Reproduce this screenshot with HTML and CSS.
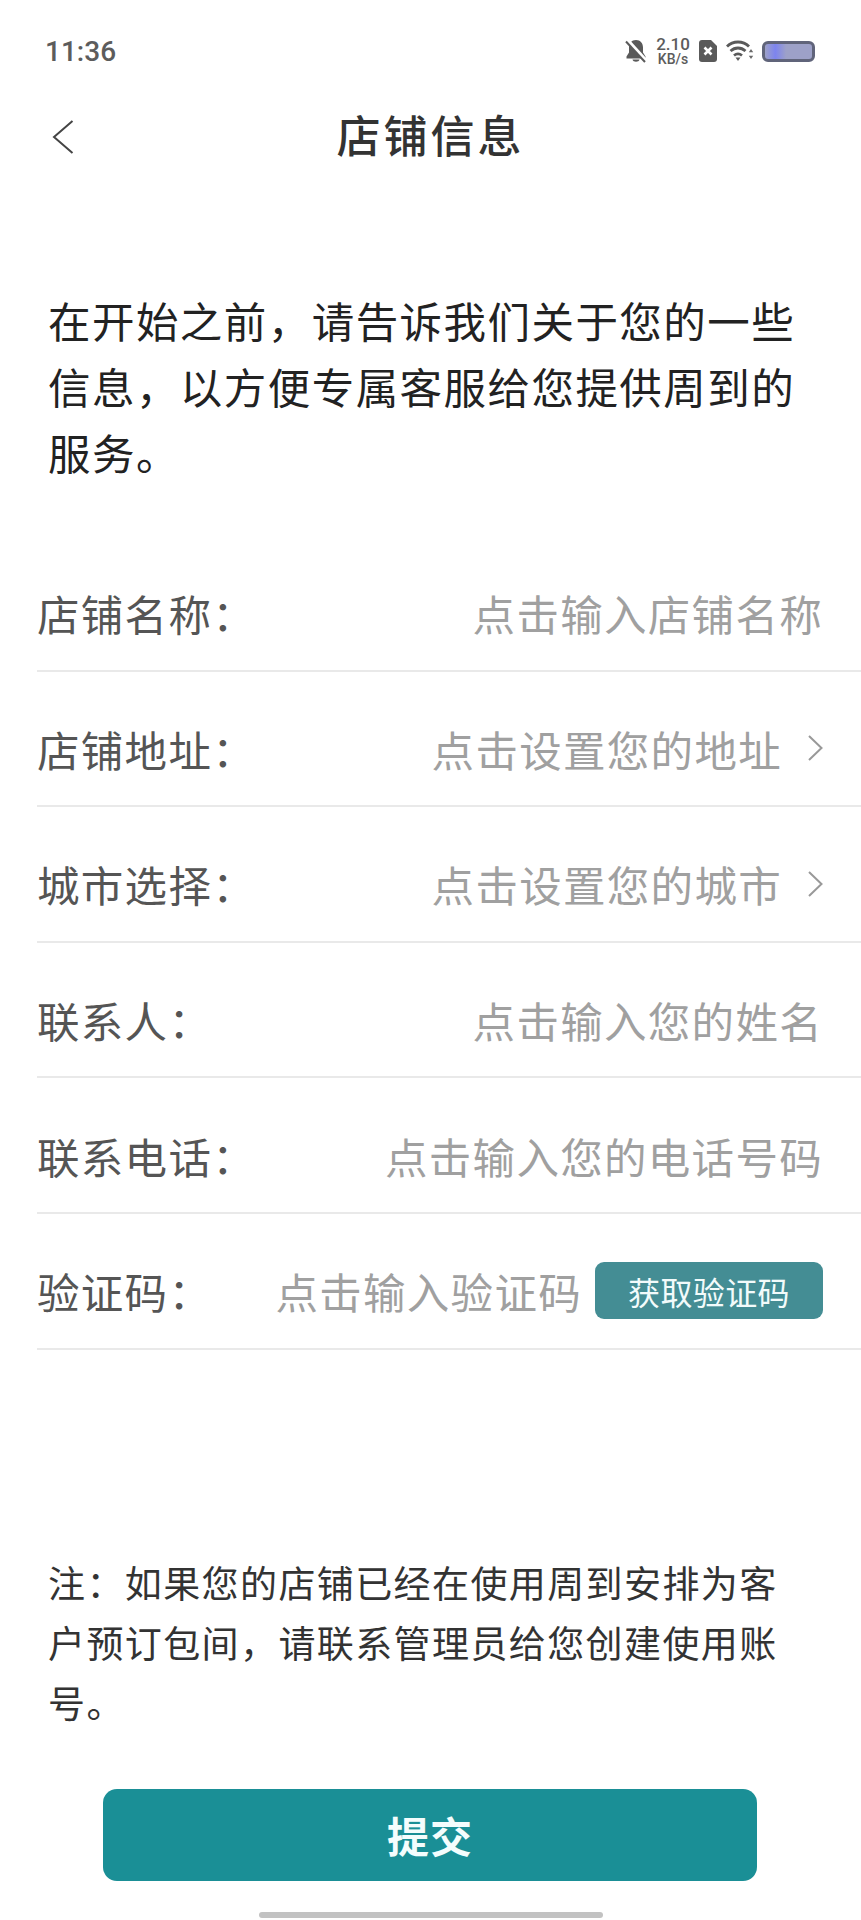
FILE: index.html
```html
<!DOCTYPE html>
<html lang="zh-CN">
<head>
    <meta charset="UTF-8">
    <meta name="viewport" content="width=device-width, initial-scale=1.0">
    <title>店铺信息</title>
    <link rel="stylesheet" href="styles.css">
</head>
<body>
    <div id="wrapper">
        <div class="status">
            <span class="time">11:36</span>
            <div class="status-icons">
                <svg class="bell" width="22" height="24" viewBox="0 0 22 24">
                    <path d="M11 1c-4.500 0-7 3.200-7 7.500v5L1.500 17.500v2h19v-2l-2.500-4v-5C18 4.200 15.500 1 11 1z" fill="#5a5a5a"/>
                    <path d="M7.500 20.500h7c-.5 3-6.500 3-7 0z" fill="#5a5a5a"/>
                    <path d="M1.500 0L21.500 22" stroke="#fff" stroke-width="3.500"/>
                    <path d="M1 2.500L20 23" stroke="#5a5a5a" stroke-width="2"/>
                </svg>
                <div class="speed"><span>2.10</span><span class="unit">KB/s</span></div>
                <svg class="sim" width="18" height="22" viewBox="0 0 18 22">
                    <path d="M3 0h9l6 6v13a3 3 0 0 1-3 3H3a3 3 0 0 1-3-3V3a3 3 0 0 1 3-3z" fill="#5a5a5a"/>
                    <path d="M5.500 7.500l7 7M12.500 7.500l-7 7" stroke="#fff" stroke-width="2.600"/>
                </svg>
                <svg class="wifi" width="28" height="22" viewBox="0 0 28 22">
                    <path d="M1 6.500C7 .5 17 .5 23 6.500" fill="none" stroke="#5a5a5a" stroke-width="2.800"/>
                    <path d="M4.500 11C9 7 15 7 19.500 11" fill="none" stroke="#5a5a5a" stroke-width="2.800"/>
                    <path d="M8 15.500c2.500-2 5.500-2 8 0" fill="none" stroke="#5a5a5a" stroke-width="2.800"/>
                    <path d="M9.500 17.500h5L12 21z" fill="#5a5a5a"/>
                    <path d="M25 9l2.200 3.200h-4.400zM25 19l-2.200-3.200h4.400z" fill="#6a6a6a"/>
                </svg>
                <div class="battery"></div>
            </div>
        </div>

        <div class="header">
            <svg class="back" width="22" height="34" viewBox="0 0 22 34">
                <path d="M20.500 1L2 17l18.500 16" fill="none" stroke="#444" stroke-width="2"/>
            </svg>
            <h1 class="title">店铺信息</h1>
        </div>

        <p class="intro">在开始之前&#65292;请告诉我们关于您的一些信息&#65292;以方便专属客服给您提供周到的服务。</p>

        <div class="form">
            <div class="row">
                <span class="label">店铺名称&#65306;</span>
                <span class="hint">点击输入店铺名称</span>
            </div>
            <div class="row">
                <span class="label">店铺地址&#65306;</span>
                <span class="hint">点击设置您的地址</span>
                <svg class="more" width="15" height="26" viewBox="0 0 15 26">
                    <path d="M1 1l12.500 12L1 25" fill="none" stroke="#999" stroke-width="2"/>
                </svg>
            </div>
            <div class="row">
                <span class="label">城市选择&#65306;</span>
                <span class="hint">点击设置您的城市</span>
                <svg class="more" width="15" height="26" viewBox="0 0 15 26">
                    <path d="M1 1l12.500 12L1 25" fill="none" stroke="#999" stroke-width="2"/>
                </svg>
            </div>
            <div class="row">
                <span class="label">联系人&#65306;</span>
                <span class="hint">点击输入您的姓名</span>
            </div>
            <div class="row">
                <span class="label">联系电话&#65306;</span>
                <span class="hint">点击输入您的电话号码</span>
            </div>
            <div class="row">
                <span class="label">验证码&#65306;</span>
                <span class="hint">点击输入验证码</span>
                <button class="code-btn">获取验证码</button>
            </div>
        </div>

        <p class="note">注&#65306;如果您的店铺已经在使用周到安排为客户预订包间&#65292;请联系管理员给您创建使用账号。</p>

        <button class="submit">提交</button>
        <div class="home-bar"></div>
    </div>
</body>
</html>
```

FILE: styles.css
```css
*{
    box-sizing: border-box;
}
body{
    margin: 0;
    background: #fff;
    font-family: "Noto Sans CJK SC", "Liberation Sans", sans-serif;
}
#wrapper{
    width: 861px;
    height: 1920px;
    display: flex;
    flex-direction: column;
    overflow: hidden;
}
.status{
    height: 100px;
    padding: 2px 46px 0 45px;
    display: flex;
    align-items: center;
    justify-content: space-between;
}
.time{
    font-family: Roboto, sans-serif;
    font-size: 28px;
    font-weight: 500;
    color: #5c5c5c;
}
.status-icons{
    display: flex;
    align-items: center;
}
.bell{
    margin-right: 9px;
}
.speed{
    width: 34px;
    margin-right: 9px;
    display: flex;
    flex-direction: column;
    align-items: center;
    font-family: Roboto, sans-serif;
    font-size: 17px;
    font-weight: 500;
    line-height: 16px;
    color: #5c5c5c;
}
.speed .unit{
    font-size: 14px;
    line-height: 14px;
}
.sim{
    margin-right: 9px;
}
.wifi{
    margin-right: 8px;
}
.battery{
    width: 53px;
    height: 21px;
    border: 3px solid #60647a;
    border-radius: 6px;
    background: linear-gradient(90deg, #9da1c8 0, #7d84ef 22%, #9da1c8 45%, #9da1c8 100%);
}
.header{
    position: relative;
    height: 72px;
    padding-bottom: 4px;
    display: flex;
    align-items: center;
    justify-content: center;
}
.back{
    position: absolute;
    left: 52px;
    top: 20px;
}
.title{
    margin: 0;
    font-size: 44px;
    font-weight: 500;
    letter-spacing: 3px;
    color: #333;
}
.intro{
    margin: 115px 0 0;
    padding: 0 60px 0 48px;
    font-size: 42.500px;
    line-height: 66px;
    letter-spacing: 1.450px;
    color: #222;
}
.form{
    margin: 51px 0 0 37px;
}
.row{
    height: 135.600px;
    padding: 20px 38px 0 0;
    border-bottom: 2px solid #e9e9e9;
    display: flex;
    align-items: center;
    font-size: 42.500px;
    letter-spacing: 1.300px;
}
.label{
    color: #555;
    margin-right: auto;
}
.hint{
    color: #a0a0a0;
}
.more{
    margin-left: 26px;
}
.code-btn{
    width: 228px;
    height: 57px;
    margin-left: 13px;
    border: none;
    border-radius: 9px;
    background: #448d94;
    color: #f2fbfb;
    font-family: inherit;
    font-size: 32px;
    letter-spacing: .400px;
}
.note{
    margin: 202px 0 0;
    padding: 0 60px 0 48px;
    font-size: 37px;
    line-height: 60px;
    letter-spacing: 1.400px;
    color: #333;
}
.submit{
    width: 654px;
    height: 92px;
    margin: 57px 0 0 103px;
    border: none;
    border-radius: 14px;
    background: #1a8f96;
    color: #f4fdfd;
    font-family: inherit;
    font-size: 42px;
    font-weight: 700;
    letter-spacing: 1px;
}
.home-bar{
    width: 344px;
    height: 6px;
    margin: 31px 0 0 259px;
    border-radius: 3px;
    background: #c2c2c2;
}
```
